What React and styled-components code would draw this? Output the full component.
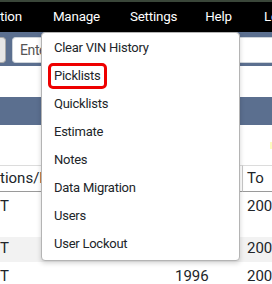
import styled, { createGlobalStyle } from "styled-components";

const GlobalStyle = createGlobalStyle`
  html, body {
    margin: 0;
    padding: 0;
  }
  body {
    width: 272px;
    height: 284px;
    overflow: hidden;
    background: #fff;
    font-family: Roboto, "Liberation Sans", sans-serif;
    color: #212529;
  }
`;

const Page = styled.div`
  position: relative;
  width: 272px;
  height: 284px;
  overflow: hidden;
`;

const TopStrip = styled.div`
  height: 2px;
  background: #3a4639;
`;

const NavBar = styled.nav`
  display: flex;
  height: 30px;
  background: #000;
  white-space: nowrap;
`;

const NavItem = styled.span`
  padding-left: ${(p) => p.$left ?? 15}px;
  padding-right: ${(p) => p.$right ?? 15}px;
  line-height: 30px;
  font-size: 13.4px;
  letter-spacing: -0.2px;
  color: #fff;
`;

const SearchBar = styled.div`
  display: flex;
  gap: 6px;
  padding: 5px 0 3px;
  background: #5b6f8f;
`;

const SideButton = styled.div`
  width: 5px;
  height: 24px;
  background: #e6e6e6;
  border: 1px solid #a9a9a9;
  border-left: none;
  border-radius: 0 4px 4px 0;
`;

const SearchInput = styled.input`
  flex: 1;
  min-width: 0;
  height: 26px;
  box-sizing: border-box;
  border: 1px solid #ced4da;
  border-right: none;
  border-radius: 4px 0 0 4px;
  padding: 0 7px;
  font: 14px Roboto, sans-serif;
  letter-spacing: -0.4px;
  color: #495057;
  &::placeholder {
    color: #555;
  }
`;

const Gap = styled.div`
  height: ${(p) => p.$h}px;
  display: flex;
  justify-content: flex-end;
  align-items: flex-start;
`;

const Caption = styled.div`
  height: 28px;
  background: #5b6f8f;
`;

const Mark = styled.div`
  width: 2px;
  height: 7px;
  margin-top: 17px;
  background: #fdfbc0;
`;

const Grid = styled.div`
  display: grid;
  grid-template-columns: 170px 72px 1fr;
  white-space: nowrap;
  font-size: 15px;
`;

const HeadCell = styled.div`
  height: 25px;
  line-height: 25px;
  padding-left: ${(p) => (p.$first ? 0 : 4)}px;
  border-top: 1px solid #dcdcdc;
  border-bottom: 1px solid #9a9a9a;
  border-left: ${(p) => (p.$first ? "none" : "1px solid #c8c8c8")};
  overflow: hidden;
`;

const Cell = styled.div`
  height: ${(p) => p.$h}px;
  padding-top: ${(p) => p.$top}px;
  box-sizing: border-box;
  padding-left: ${(p) => (p.$first ? 0 : 5)}px;
  line-height: 20px;
  background: ${(p) => (p.$alt ? "#f2f2f2" : "#fff")};
  overflow: hidden;
`;

const Menu = styled.div`
  position: absolute;
  left: 41px;
  top: 32px;
  width: 199px;
  box-sizing: border-box;
  padding: 1px 0 2px;
  background: #fff;
  border: 1px solid #b4b4b4;
  border-radius: 4px;
  box-shadow: 0 2px 5px rgba(0, 0, 0, 0.18);
`;

const MenuItem = styled.div`
  height: 28px;
  padding: 1px 6px;
  box-sizing: border-box;
`;

const MenuLabel = styled.span`
  display: inline-block;
  height: 26px;
  line-height: 26px;
  padding: 0 6px;
  box-sizing: border-box;
  font-size: 13px;
  letter-spacing: -0.25px;
  color: #212529;
  border-radius: 5px;
  outline: ${(p) => (p.$active ? "3px solid #ee0000" : "none")};
  outline-offset: -3px;
`;

const menuItems = [
  "Clear VIN History",
  "Picklists",
  "Quicklists",
  "Estimate",
  "Notes",
  "Data Migration",
  "Users",
  "User Lockout",
];

const rows = [
  { h: 45, top: 4, cells: ["T", "", "2006"] },
  { h: 25, top: 1, cells: ["T", "", "2006"], alt: true },
  { h: 25, top: 4, cells: ["T", "1996", "2006"] },
];

export default function App() {
  return (
    <Page>
      <GlobalStyle />
      <TopStrip />
      <NavBar>
        <NavItem $left={0} $right={16}>tion</NavItem>
        <NavItem>Manage</NavItem>
        <NavItem $right={14}>Settings</NavItem>
        <NavItem $left={14} $right={17}>Help</NavItem>
        <NavItem $right={0}>Logout</NavItem>
      </NavBar>
      <SearchBar>
        <SideButton />
        <SearchInput placeholder="Enter VIN" readOnly />
      </SearchBar>
      <Gap $h={31} />
      <Caption />
      <Gap $h={40}>
        <Mark />
      </Gap>
      <Grid>
        <HeadCell $first>tions/Reference</HeadCell>
        <HeadCell>From</HeadCell>
        <HeadCell>To</HeadCell>
        {rows.map((r, i) =>
          r.cells.map((c, j) => (
            <Cell key={`${i}-${j}`} $h={r.h} $top={r.top} $alt={r.alt} $first={j === 0}>
              {c}
            </Cell>
          ))
        )}
      </Grid>
      <Menu>
        {menuItems.map((m) => (
          <MenuItem key={m}>
            <MenuLabel $active={m === "Picklists"}>{m}</MenuLabel>
          </MenuItem>
        ))}
      </Menu>
    </Page>
  );
}
